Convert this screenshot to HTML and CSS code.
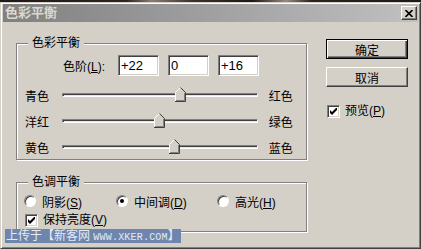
FILE: index.html
```html
<html lang="zh">
<head>
    <meta charset="UTF-8">
    <title>色彩平衡</title>
    <link rel="stylesheet" href="styles.css">
</head>
<body>
    <div class="photo"></div>
    <div class="dialog">
        <div class="titlebar">
            <span class="title">色彩平衡</span>
            <button class="close">
                <svg width="8" height="7" viewBox="0 0 8 7"><path d="M0.5 0 L7.5 7 M7.5 0 L0.5 7" stroke="#000" stroke-width="1.6"/></svg>
            </button>
        </div>
        <div class="content">
            <div class="main">
                <div class="group balance">
                    <span class="caption">色彩平衡</span>
                    <div class="levels">
                        <span class="levels-label">色阶(<u>L</u>):</span>
                        <input class="field" type="text" value="+22">
                        <input class="field" type="text" value="0">
                        <input class="field" type="text" value="+16">
                    </div>
                    <div class="slider-row first">
                        <span class="lbl">青色</span>
                        <div class="track">
                            <span class="thumb" style="left: 61%">
                                <svg width="11" height="15" viewBox="0 0 11 15"><polygon points="0,15 0,5.5 5.5,0 11,5.5 11,15" fill="#d4d0c8"/><polyline points="0.5,14 0.5,5.5 5.5,0.5" fill="none" stroke="#fff"/><polyline points="5.5,0.5 10.5,5.5 10.5,14.5 0,14.5" fill="none" stroke="#404040"/><polyline points="9.5,6 9.5,13.5 1,13.5" fill="none" stroke="#808080"/></svg>
                            </span>
                        </div>
                        <span class="lbl right">红色</span>
                    </div>
                    <div class="slider-row">
                        <span class="lbl">洋红</span>
                        <div class="track">
                            <span class="thumb" style="left: 50%">
                                <svg width="11" height="15" viewBox="0 0 11 15"><polygon points="0,15 0,5.5 5.5,0 11,5.5 11,15" fill="#d4d0c8"/><polyline points="0.5,14 0.5,5.5 5.5,0.5" fill="none" stroke="#fff"/><polyline points="5.5,0.5 10.5,5.5 10.5,14.5 0,14.5" fill="none" stroke="#404040"/><polyline points="9.5,6 9.5,13.5 1,13.5" fill="none" stroke="#808080"/></svg>
                            </span>
                        </div>
                        <span class="lbl right">绿色</span>
                    </div>
                    <div class="slider-row">
                        <span class="lbl">黄色</span>
                        <div class="track">
                            <span class="thumb" style="left: 58%">
                                <svg width="11" height="15" viewBox="0 0 11 15"><polygon points="0,15 0,5.5 5.5,0 11,5.5 11,15" fill="#d4d0c8"/><polyline points="0.5,14 0.5,5.5 5.5,0.5" fill="none" stroke="#fff"/><polyline points="5.5,0.5 10.5,5.5 10.5,14.5 0,14.5" fill="none" stroke="#404040"/><polyline points="9.5,6 9.5,13.5 1,13.5" fill="none" stroke="#808080"/></svg>
                            </span>
                        </div>
                        <span class="lbl right">蓝色</span>
                    </div>
                </div>

                <div class="group tone">
                    <span class="caption">色调平衡</span>
                    <div class="radio-row">
                        <label class="radio-item shadow"><span class="radio"></span><span>阴影(<u>S</u>)</span></label>
                        <label class="radio-item mid"><span class="radio on"></span><span>中间调(<u>D</u>)</span></label>
                        <label class="radio-item"><span class="radio"></span><span>高光(<u>H</u>)</span></label>
                    </div>
                    <label class="check keep">
                        <span class="box">
                            <svg width="7" height="7" viewBox="0 0 7 7"><polygon points="0,2 2,4 7,-1 7,2 2,7 0,5" fill="#000"/></svg>
                        </span>
                        <span>保持亮度(<u>V</u>)</span>
                    </label>
                </div>
            </div>

            <div class="side">
                <button class="btn default">确定</button>
                <button class="btn">取消</button>
                <label class="check preview">
                    <span class="box">
                        <svg width="7" height="7" viewBox="0 0 7 7"><polygon points="0,2 2,4 7,-1 7,2 2,7 0,5" fill="#000"/></svg>
                    </span>
                    <span>预览(<u>P</u>)</span>
                </label>
            </div>
        </div>
        <div class="watermark">上传于【新客网 <span class="mono">WWW.XKER.COM</span>】</div>
    </div>
</body>
</html>
```

FILE: styles.css
```css
body {
    margin: 0;
    width: 421px;
    height: 249px;
    overflow: hidden;
    background: #2a2420;
    font-family: "Liberation Sans", "Noto Sans CJK SC", sans-serif;
    font-size: 12px;
    color: #000;
}
.photo {
    height: 2px;
    background: linear-gradient(90deg, #1e1a18 0, #2c2522 30%, #8c7c74 36%, #3a302c 46%, #1e1a18 60%, #9a8a80 68%, #2a2420 74%, #1e1a18 100%);
}
.dialog {
    position: relative;
    height: 247px;
    box-sizing: border-box;
    background: #d4d0c8;
    border: 1px solid;
    border-color: #d4d0c8 #404040 #404040 #d4d0c8;
    box-shadow: inset 1px 1px #fff, inset -1px -1px #808080;
    padding: 1px 2px 2px 2px;
}
.titlebar {
    height: 18px;
    display: flex;
    align-items: center;
    justify-content: space-between;
    padding: 0 1px 0 2px;
    background: linear-gradient(90deg, #808080, #c0c0c0);
}
.title {
    color: #dcd8d0;
    font-weight: bold;
    font-size: 13px;
    line-height: 18px;
}
.close {
    width: 16px;
    height: 14px;
    padding: 0;
    display: flex;
    align-items: center;
    justify-content: center;
    background: #d4d0c8;
    border: 1px solid;
    border-color: #fff #404040 #404040 #fff;
    box-shadow: inset -1px -1px #808080;
}
.content {
    display: flex;
    padding: 17px 0 0 13px;
}
.main {
    width: 291px;
    padding-top: 4px;
}
.group {
    position: relative;
    box-sizing: border-box;
    border: 1px solid #808080;
    box-shadow: inset 1px 1px #fff, 1px 1px #fff;
}
.caption {
    position: absolute;
    top: -9px;
    left: 11px;
    padding: 0 4px;
    line-height: 16px;
    background: #d4d0c8;
}
.balance {
    height: 117px;
    padding-top: 11px;
}
.levels {
    display: flex;
    align-items: center;
    height: 21px;
    padding-left: 46px;
}
.levels-label {
    width: 55px;
}
.field {
    width: 41px;
    height: 21px;
    box-sizing: border-box;
    margin: 0 9px 0 0;
    padding: 0 2px;
    font-family: "Liberation Sans", sans-serif;
    font-size: 13px;
    background: #fff;
    border: 1px solid;
    border-color: #808080 #fff #fff #808080;
    box-shadow: inset 1px 1px #404040, inset -1px -1px #d4d0c8;
    outline: none;
}
.slider-row {
    display: flex;
    align-items: center;
    height: 26px;
    padding-left: 8px;
}
.slider-row.first {
    margin-top: 6px;
}
.lbl {
    width: 38px;
}
.lbl.right {
    margin-left: 11px;
}
.track {
    position: relative;
    width: 199px;
    height: 4px;
    box-sizing: border-box;
    border: 1px solid;
    border-color: #808080 #fff #fff #808080;
    box-shadow: inset 1px 1px #404040;
    background: #e8e6e0;
}
.thumb {
    position: absolute;
    top: -7px;
    margin-left: -6px;
    width: 11px;
    height: 15px;
    line-height: 0;
}
.tone {
    margin-top: 22px;
    height: 50px;
    padding-top: 10px;
}
.radio-row {
    display: flex;
    height: 16px;
    align-items: center;
    padding-left: 7px;
}
.radio-item {
    display: flex;
    align-items: center;
    gap: 6px;
}
.radio-item.shadow {
    width: 92px;
}
.radio-item.mid {
    width: 101px;
}
.radio {
    position: relative;
    width: 12px;
    height: 12px;
    box-sizing: border-box;
    border-radius: 50%;
    background: #fff;
    border: 1px solid;
    border-color: #808080 #fff #fff #808080;
    box-shadow: inset 1px 1px #404040;
}
.radio.on::after {
    content: "";
    position: absolute;
    left: 3px;
    top: 3px;
    width: 4px;
    height: 4px;
    border-radius: 50%;
    background: #000;
}
.check {
    display: flex;
    align-items: center;
    gap: 5px;
    height: 15px;
    line-height: 15px;
}
.keep {
    margin-top: 4px;
    padding-left: 8px;
}
.box {
    width: 13px;
    height: 13px;
    box-sizing: border-box;
    display: flex;
    align-items: center;
    justify-content: center;
    background: #fff;
    border: 1px solid;
    border-color: #808080 #fff #fff #808080;
    box-shadow: inset 1px 1px #404040, inset -1px -1px #d4d0c8;
}
.side {
    display: flex;
    flex-direction: column;
    margin-left: 19px;
}
.btn {
    width: 82px;
    height: 20px;
    padding: 0;
    font-family: "Liberation Sans", "Noto Sans CJK SC", sans-serif;
    font-size: 12px;
    color: #000;
    background: #d4d0c8;
    border: 1px solid;
    border-color: #fff #404040 #404040 #fff;
    box-shadow: inset -1px -1px #808080;
    margin-bottom: 8px;
}
.btn.default {
    border: 1px solid #000;
    box-shadow: inset 1px 1px #fff, inset -1px -1px #404040, inset -2px -2px #808080;
}
.preview {
    margin-top: 9px;
    padding-left: 1px;
}
.watermark {
    position: absolute;
    left: 4px;
    top: 226px;
    height: 14px;
    padding: 0 1px;
    line-height: 14px;
    background: #6e86ae;
    color: #e6eaf2;
    font-size: 12px;
    white-space: nowrap;
}
.mono {
    font-family: "Liberation Mono", monospace;
    font-size: 10px;
    letter-spacing: 0.2px;
}
```
